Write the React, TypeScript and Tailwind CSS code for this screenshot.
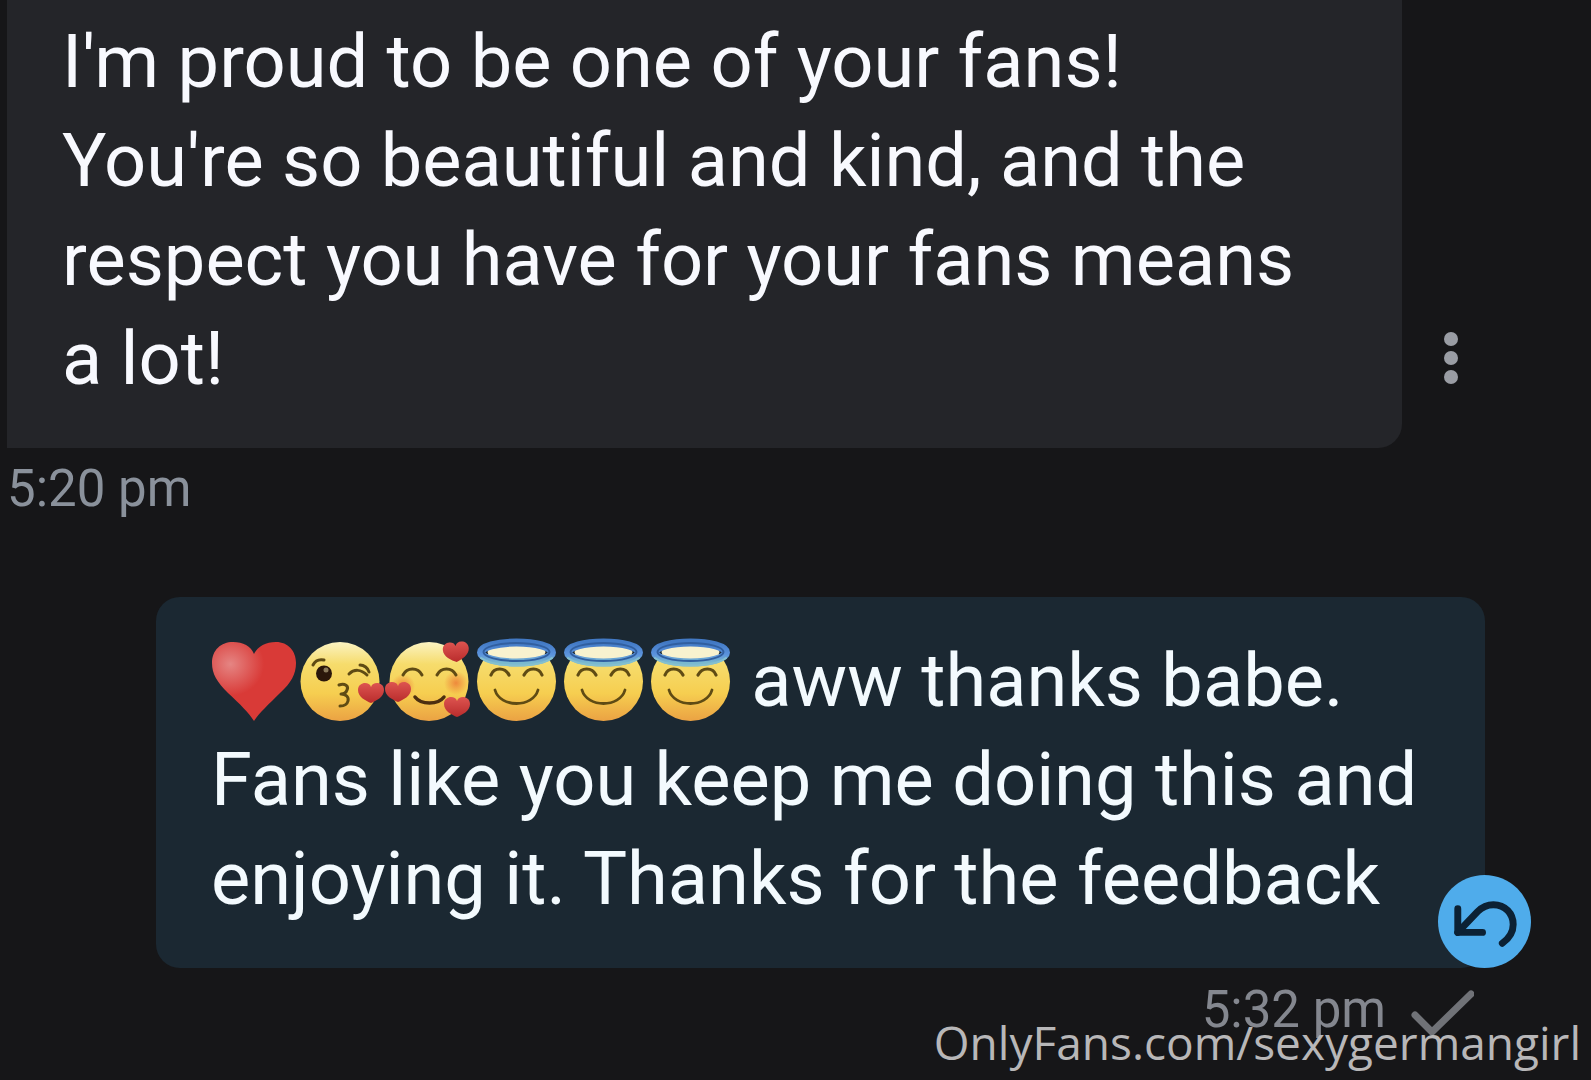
import React from "react";

const MiniHeart = ({ x, y, rotate = 0 }: { x: number; y: number; rotate?: number }) => (
  <path
    transform={`translate(${x} ${y}) rotate(${rotate})`}
    d="M0 10C-5 8-13 4-13-3C-13-8-9-10-6-10C-3-10-1-9 0-6C1-9 3-10 6-10C9-10 13-8 13-3C13 4 5 8 0 10Z"
    fill="url(#mini-heart)"
  />
);

const Emoji = ({ label, children }: { label: string; children: React.ReactNode }) => (
  <svg
    role="img"
    aria-label={label}
    viewBox="0 0 87 87"
    className="inline-block w-[87px] h-[87px] align-[-16px]"
    fill="none"
    strokeLinecap="round"
    strokeLinejoin="round"
  >
    {children}
  </svg>
);

const RedHeart = () => (
  <Emoji label="Red heart">
    <defs>
      <radialGradient id="red-heart" cx="0.22" cy="0.28" r="0.4">
        <stop offset="0" stopColor="#e58583" />
        <stop offset="1" stopColor="#d93a37" />
      </radialGradient>
      <linearGradient id="mini-heart" x1="0" y1="0" x2="0" y2="1">
        <stop offset="0" stopColor="#dd5450" />
        <stop offset="1" stopColor="#b92c2c" />
      </linearGradient>
      <linearGradient id="face" x1="0" y1="0" x2="0" y2="1">
        <stop offset="0" stopColor="#fbf3c2" />
        <stop offset="0.28" stopColor="#f6dc6c" />
        <stop offset="0.65" stopColor="#f6ce50" />
        <stop offset="1" stopColor="#eba243" />
      </linearGradient>
      <radialGradient id="blush">
        <stop offset="0" stopColor="#ee8a3c" />
        <stop offset="1" stopColor="#ee8a3c" stopOpacity="0" />
      </radialGradient>
      <linearGradient id="halo" x1="0" y1="0" x2="0" y2="1">
        <stop offset="0" stopColor="#4279c4" />
        <stop offset="0.6" stopColor="#5b93dd" />
        <stop offset="1" stopColor="#7ab9cf" />
      </linearGradient>
    </defs>
    <path
      d="M43 86C38 78 29 69 17 58C6 47 1 39 1 28C1 15 10 7 22 7C32 7 40 11 43 19C47 11 55 7 65 7C77 7 85 16 85 28C85 39 80 48 69 58C58 69 48 78 43 86Z"
      fill="url(#red-heart)"
    />
  </Emoji>
);

const KissingFace = () => (
  <Emoji label="Face blowing a kiss">
    <circle cx="42" cy="46.5" r="39.5" fill="url(#face)" />
    <g stroke="#5f4b14" strokeWidth="3">
      <path d="M15 30C17 26 21 24 26 25" />
      <path d="M51 39C56 34 63 34 69 40" />
      <path d="M62 30C66 30 70 33 71 37" />
      <path d="M41 50C47 48 51 51 49 55C48 58 46 59 43 59C48 59 51 62 50 66C49 70 46 71 42 71" />
    </g>
    <circle cx="26" cy="38.5" r="8" fill="#2b170b" />
    <circle cx="28" cy="35" r="2.5" fill="#8a7a5c" />
    <MiniHeart x={73} y={58} />
  </Emoji>
);

const LovingFace = () => (
  <Emoji label="Smiling face with hearts">
    <circle cx="44" cy="46.5" r="39.5" fill="url(#face)" />
    <circle cx="18" cy="51" r="12" fill="url(#blush)" />
    <circle cx="71" cy="48" r="12" fill="url(#blush)" />
    <g stroke="#5f4b14" strokeWidth="3">
      <path d="M18 40C22 32 33 32 37 40" />
      <path d="M52 40C56 32 67 32 71 40" />
      <path d="M30 62C36 70 53 70 59 62" stroke="#4c2f10" strokeWidth="3.5" />
    </g>
    <MiniHeart x={13} y={57} />
    <MiniHeart x={71} y={17} rotate={-4} />
    <MiniHeart x={72} y={72} />
  </Emoji>
);

const AngelFace = () => (
  <Emoji label="Smiling face with halo">
    <circle cx="44.5" cy="46.5" r="39.5" fill="url(#face)" />
    <ellipse cx="44.5" cy="17" rx="29" ry="8" fill="#f8f2cf" />
    <ellipse cx="44.5" cy="17.5" rx="35.5" ry="10" stroke="url(#halo)" strokeWidth="8" />
    <ellipse cx="44.5" cy="17" rx="33" ry="9" stroke="#315fa0" strokeWidth="2" />
    <path d="M9 23C22 33 67 33 80 23" stroke="#85c0cf" strokeWidth="2" />
    <g stroke="#5f4b14" strokeWidth="3.2">
      <path d="M19 40C22 32 33 32 37 40" />
      <path d="M52 40C56 32 67 32 70 40" />
      <path d="M23 55C28 73 61 73 66 55" strokeWidth="2.8" />
    </g>
  </Emoji>
);

const App = () => {
  return (
    <div className="relative min-h-screen overflow-hidden bg-[#161618] font-['Roboto',sans-serif]">
      <main>
        {/* Received message */}
        <section>
          <div className="flex items-end pl-[7px] pr-[91px]">
            <p className="flex-1 rounded-br-3xl bg-[#242529] px-[55px] pt-3 pb-10 text-[74px] leading-[99px] text-[#f8f9fe]">
              I'm proud to be one of your fans!
              <br />
              You're so beautiful and kind, and the respect you have for your fans means a lot!
            </p>
            <button
              type="button"
              aria-label="Message options"
              className="mb-[41px] flex h-[98px] w-[98px] flex-col items-center justify-center gap-[5px]"
            >
              <span className="size-[14px] rounded-full bg-[#9a9da4]" />
              <span className="size-[14px] rounded-full bg-[#9a9da4]" />
              <span className="size-[14px] rounded-full bg-[#9a9da4]" />
            </button>
          </div>
          <time className="mt-[11px] block pl-[7px] text-[51px] leading-[60px] text-[#8a919b]">5:20 pm</time>
        </section>

        {/* Sent message */}
        <section className="mt-[78px] mr-[106px] ml-[156px]">
          <div className="relative rounded-3xl bg-[#1b2832] pt-[34px] pr-[50px] pb-10 pl-[55px]">
            <p className="text-[74px] leading-[99px] text-[#f3fafe]">
              <span className="whitespace-nowrap">
                <RedHeart />
                <KissingFace />
                <LovingFace />
                <AngelFace />
                <AngelFace />
                <AngelFace />
              </span>{" "}
              aww thanks babe. Fans like you keep me doing this and enjoying it. Thanks for the feedback
            </p>
            <button
              type="button"
              aria-label="Reply"
              className="absolute right-[-46px] bottom-0 size-[93px] rounded-full bg-[#4faceb]"
            >
              <svg viewBox="0 0 94 94" fill="none" stroke="#0c2134" strokeWidth="7" strokeLinecap="round" strokeLinejoin="round">
                <path d="M20 34V58H45" />
                <path d="M20 58L40 37C46 31 51 30 56 30C68 30 76 39 76 50C76 58 72 64 65 69" />
              </svg>
            </button>
          </div>
          <div className="mt-3 flex items-center justify-end gap-6 pr-[11px]">
            <time className="text-[51px] leading-[60px] text-[#84878f]">5:32 pm</time>
            <svg
              role="img"
              aria-label="Sent"
              viewBox="0 0 64 60"
              className="h-[60px] w-16"
              fill="none"
              stroke="#707277"
              strokeWidth="7"
              strokeLinecap="round"
              strokeLinejoin="round"
            >
              <path d="M5 35L22 52L61 14" />
            </svg>
          </div>
        </section>
      </main>

      {/* Watermark */}
      <div className="absolute right-[10px] bottom-2 font-['Open_Sans',sans-serif] text-[46px] leading-[60px] text-[#b8b7b8]">
        OnlyFans.com/sexygermangirl
      </div>
    </div>
  );
};

export default App;
